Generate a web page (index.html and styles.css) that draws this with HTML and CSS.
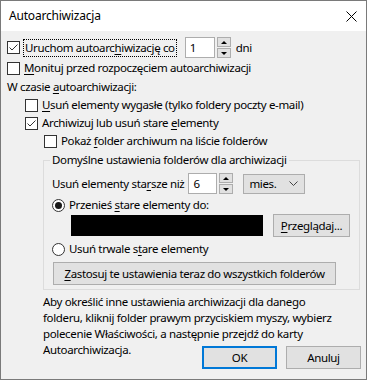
FILE: index.html
```html
<!DOCTYPE html>
<html lang="pl">
<head>
    <meta charset="UTF-8">
    <title>Autoarchiwizacja</title>
    <link rel="stylesheet" href="styles.css">
</head>
<body>
    <div class="window">
        <div class="titlebar">
            <span class="title">Autoarchiwizacja</span>
            <svg class="close" width="11" height="11" viewBox="0 0 11 11">
                <path d="M0.5 0.5 L10.5 10.5 M10.5 0.5 L0.5 10.5" stroke="#000" stroke-width="1" fill="none"/>
            </svg>
        </div>

        <div class="content">
            <div class="row row-run">
                <span class="box">
                    <svg width="11" height="11" viewBox="0 0 11 11"><polyline points="1.5,5.5 4,8 9.5,2.5" fill="none" stroke="#333" stroke-width="1"/></svg>
                </span>
                <span class="focus">Uruchom autoarc<u>h</u>iwizację co</span>
                <span class="spin spin-days">
                    <span class="field">1</span>
                    <span class="arrows"><span class="arrow up"></span><span class="arrow down"></span></span>
                </span>
                <span class="unit">dni</span>
            </div>

            <div class="row row-prompt">
                <span class="box"></span>
                <span class="label"><u>M</u>onituj przed rozpoczęciem autoarchiwizacji</span>
            </div>

            <div class="row section">
                <span>W czasie <u>a</u>utoarchiwizacji:</span>
            </div>

            <div class="row indent-1">
                <span class="box"></span>
                <span class="label"><u>U</u>suń elementy wygasłe (tylko foldery poczty e-mail)</span>
            </div>

            <div class="row indent-1">
                <span class="box">
                    <svg width="11" height="11" viewBox="0 0 11 11"><polyline points="1.5,5.5 4,8 9.5,2.5" fill="none" stroke="#333" stroke-width="1"/></svg>
                </span>
                <span class="label">Archiwizuj lub usuń stare <u>e</u>lementy</span>
            </div>

            <div class="row indent-2">
                <span class="box"></span>
                <span class="label">Pokaż <u>f</u>older archiwum na liście folderów</span>
            </div>

            <fieldset class="group">
                <legend>Domyślne ustawienia folderów dla archiwizacji</legend>

                <div class="row row-age">
                    <span>Usuń elementy sta<u>r</u>sze niż</span>
                    <span class="spin spin-age">
                        <span class="field">6</span>
                        <span class="arrows"><span class="arrow up"></span><span class="arrow down"></span></span>
                    </span>
                    <span class="select">
                        <span>mies.</span>
                        <svg width="9" height="5" viewBox="0 0 9 5"><polyline points="0.5,0.5 4.5,4.5 8.5,0.5" fill="none" stroke="#444" stroke-width="1"/></svg>
                    </span>
                </div>

                <div class="row row-radio">
                    <span class="radio selected"></span>
                    <span class="label">Przenieś <u>s</u>tare elementy do:</span>
                </div>

                <div class="row row-path">
                    <span class="path"></span>
                    <button class="btn btn-browse"><u>P</u>rzeglądaj...</button>
                </div>

                <div class="row row-radio row-delete">
                    <span class="radio"></span>
                    <span class="label">Usuń trwale s<u>t</u>are elementy</span>
                </div>

                <button class="btn btn-apply"><u>Z</u>astosuj te ustawienia teraz do wszystkich folderów</button>
            </fieldset>

            <p class="note">Aby określić inne ustawienia archiwizacji dla danego<br>folderu, kliknij folder prawym przyciskiem myszy, wybierz<br>polecenie Właściwości, a następnie przejdź do karty<br>Autoarchiwizacja.</p>

            <div class="actions">
                <button class="btn btn-default">OK</button>
                <button class="btn">Anuluj</button>
            </div>
        </div>
    </div>
</body>
</html>
```

FILE: styles.css
```css
* {
    box-sizing: border-box;
}

body {
    margin: 0;
    font-family: "Noto Sans", "Open Sans", sans-serif;
    font-size: 11.5px;
    line-height: 16px;
    letter-spacing: -0.35px;
    color: #000;
}

u {
    text-underline-offset: 2px;
}

.window {
    width: 367px;
    height: 380px;
    border: 1px solid #7a7a7a;
    background: #f0f0f0;
    display: flex;
    flex-direction: column;
}

.titlebar {
    height: 30px;
    flex: none;
    background: #fff;
    display: flex;
    align-items: center;
    justify-content: space-between;
    padding: 0 9px 0 8px;
}

.title {
    font-size: 12px;
    letter-spacing: -0.2px;
}

.content {
    flex: 1;
    padding: 6px 5px 0 6px;
}

/* rows */
.row {
    display: flex;
    align-items: center;
    height: 18px;
    white-space: nowrap;
}

.row-run {
    height: 21px;
}

.row-prompt {
    height: 20px;
}

.indent-1 {
    margin-left: 18px;
}

.indent-2 {
    margin-left: 37px;
}

.label {
    margin-left: 4px;
}

/* checkbox + radio */
.box {
    width: 13px;
    height: 13px;
    flex: none;
    border: 1px solid #333;
    background: #fff;
    display: flex;
    align-items: center;
    justify-content: center;
}

.radio {
    width: 13px;
    height: 13px;
    flex: none;
    border: 1px solid #333;
    border-radius: 50%;
    background: #fff;
    display: flex;
    align-items: center;
    justify-content: center;
}

.radio.selected::after {
    content: "";
    width: 7px;
    height: 7px;
    border-radius: 50%;
    background: #1a1a1a;
}

.focus {
    margin-left: 3px;
    padding: 0 1px;
    border: 1px dotted #000;
}

/* spin boxes */
.spin {
    display: flex;
    height: 21px;
}

.spin-days {
    margin-left: 8px;
}

.spin-age {
    margin-left: 4px;
}

.field {
    width: 30px;
    height: 100%;
    background: #fff;
    border: 1px solid #adadad;
    padding-left: 4px;
    display: flex;
    align-items: center;
}

.spin-age .field {
    width: 29px;
}

.arrows {
    width: 14px;
    margin-left: 2px;
    display: flex;
    flex-direction: column;
    gap: 1px;
}

.arrow {
    flex: 1;
    background: #e1e1e1;
    border: 1px solid #adadad;
    display: flex;
    align-items: center;
    justify-content: center;
}

.arrow::after {
    content: "";
    border-left: 3px solid transparent;
    border-right: 3px solid transparent;
}

.arrow.up::after {
    border-bottom: 3px solid #000;
}

.arrow.down::after {
    border-top: 3px solid #000;
}

.unit {
    margin-left: 5px;
}

/* group box */
.group {
    margin: 2px 0 0 36px;
    width: 317px;
    padding: 0 8px 4px 8px;
    border: 1px solid #dcdcdc;
    min-width: 0;
}

.group legend {
    padding: 0 2px;
    margin-left: -2px;
}

.row-age {
    margin-top: 5px;
    height: 21px;
}

.select {
    margin-left: 10px;
    width: 62px;
    height: 20px;
    background: #e1e1e1;
    border: 1px solid #adadad;
    padding: 0 6px 0 5px;
    display: flex;
    align-items: center;
    justify-content: space-between;
}

.row-radio {
    margin-top: 2px;
}

.row-delete {
    margin-top: 3px;
}

.row-path {
    height: 23px;
}

.path {
    width: 192px;
    height: 21px;
    margin-left: 19px;
    background: #000;
}

/* buttons */
.btn {
    font: inherit;
    letter-spacing: inherit;
    color: #000;
    height: 23px;
    width: 75px;
    padding: 0;
    background: #e1e1e1;
    border: 1px solid #adadad;
    display: flex;
    align-items: center;
    justify-content: center;
}

.btn-browse {
    width: 77px;
    margin-left: 10px;
}

.btn-apply {
    width: 283px;
    margin: 4px 0 0 1px;
}

.btn-default {
    border: 2px solid #0078d7;
}

.note {
    margin: 4px 0 0 36px;
    white-space: nowrap;
}

.actions {
    display: flex;
    justify-content: flex-end;
    gap: 9px;
    margin-top: -12px;
}
```
